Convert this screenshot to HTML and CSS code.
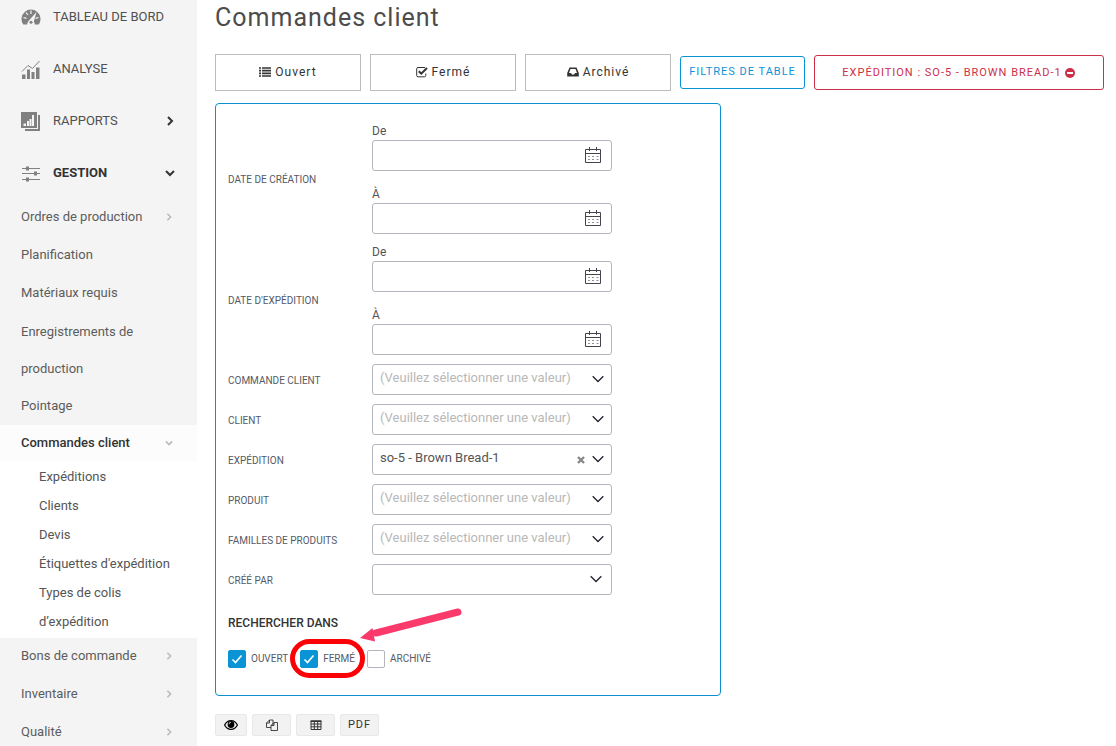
FILE: index.html
```html
<!DOCTYPE html>
<html lang="fr">
<head>
<meta charset="utf-8">
<meta name="viewport" content="width=device-width, initial-scale=1">
<title>Commandes client</title>
<link rel="stylesheet" href="styles.css">
</head>
<body>
<svg class="defs" aria-hidden="true">
  <symbol id="right" viewBox="0 0 10 10"><path d="M3 1l4 4-4 4" fill="none" stroke="currentColor" stroke-width="2"/></symbol>
  <symbol id="down" viewBox="0 0 10 10"><path d="M1 3l4 4 4-4" fill="none" stroke="currentColor" stroke-width="2"/></symbol>
  <symbol id="chevron" viewBox="0 0 12 8"><path d="M.7 1.2L6 6.5l5.300-5.300" fill="none" stroke="currentColor" stroke-width="1.300"/></symbol>
  <symbol id="calendar" viewBox="0 0 16 17"><g fill="none" stroke="currentColor"><path d="M.5 2.500h15v13H.500zM.5 6.500h15M4.500 0v4M11.500 0v4"/><path d="M3 9.500h2M7 9.500h2M11.500 9.500h2M3 12.500h2M7 12.500h2M11.500 12.500h2" stroke-opacity=".6"/></g></symbol>
</svg>
<div class="app">
  <aside class="sidebar">
    <nav>
      <ul class="menu">
        <li><a class="top" href="#"><svg class="top-icon" viewBox="0 0 20 20"><path d="M2.200 17.500A9.500 9.500 0 1 1 17.800 17.500h-4A3.800 3.800 0 0 0 6.200 17.500z" fill="currentColor"/><path d="M10 3.500v3.500M5 5.500l2 2.500M2.500 10.500l3 .8M17.500 10.500l-3 .8" stroke="#f4f4f4" stroke-width="1.200"/><path d="M15.500 5l-3 10.500a2.600 2.600 0 1 1-4.500-2z" fill="#f4f4f4"/><circle cx="10" cy="15.200" r="1.500" fill="currentColor"/></svg><span>TABLEAU DE BORD</span></a></li>
        <li><a class="top" href="#"><svg class="top-icon" viewBox="0 0 20 20"><path d="M1 15.500h3.500V20H1zM6 10.500h3V20H6zM10.500 13h3v7h-3zM15 8.500h3.500V20H15z" fill="currentColor"/><path d="M1 12.500l6-6 4.500 3L18.500 2" fill="none" stroke="currentColor"/></svg><span>ANALYSE</span></a></li>
        <li><a class="top" href="#"><svg class="top-icon" viewBox="0 0 20 20"><path d="M0 1h16v16H0zM17 4h2v16H4v-2h13z" fill="currentColor"/><path d="M2.500 12.500H5V15H2.500zM6 10h2v5H6zM8.500 8h2v7h-2zM11 4h2v11h-2z" fill="#f4f4f4"/></svg><span>RAPPORTS</span><svg class="mark"><use href="#right"/></svg></a></li>
        <li><a class="top current" href="#"><svg class="top-icon" viewBox="0 0 20 20"><path d="M1 5.500h18M1 10.500h18M1 16.500h18" stroke="currentColor"/><path d="M5 3.500h3v4H5zM13 8.500h3v4h-3zM5 14.500h3v4H5z" fill="currentColor"/></svg><span>GESTION</span><svg class="mark"><use href="#down"/></svg></a>
          <ul class="sub">
            <li><a href="#">Ordres de production<svg class="mark"><use href="#right"/></svg></a></li>
            <li><a href="#">Planification</a></li>
            <li><a href="#">Matériaux requis</a></li>
            <li><a href="#">Enregistrements de production</a></li>
            <li><a href="#">Pointage</a></li>
          </ul>
          <div class="open">
            <a class="open-head" href="#">Commandes client<svg class="mark"><use href="#down"/></svg></a>
            <ul class="leaf">
              <li><a href="#">Expéditions</a></li>
              <li><a href="#">Clients</a></li>
              <li><a href="#">Devis</a></li>
              <li><a href="#">Étiquettes d'expédition</a></li>
              <li><a href="#">Types de colis d’expédition</a></li>
            </ul>
          </div>
          <ul class="sub">
            <li><a href="#">Bons de commande<svg class="mark"><use href="#right"/></svg></a></li>
            <li><a href="#">Inventaire<svg class="mark"><use href="#right"/></svg></a></li>
            <li><a href="#">Qualité<svg class="mark"><use href="#right"/></svg></a></li>
          </ul>
        </li>
      </ul>
    </nav>
  </aside>
  <main class="main">
    <h1>Commandes client</h1>
    <div class="toolbar">
      <button class="state" type="button"><svg class="icon" viewBox="0 0 12 12"><path d="M0 2h2M0 4.700h2M0 7.400h2M0 10h2M3 2h9M3 4.700h9M3 7.400h9M3 10h9" stroke="currentColor" stroke-width="1.700"/></svg>Ouvert</button>
      <button class="state" type="button"><svg class="icon" viewBox="0 0 12 12"><path d="M9 1.500H2A1.300 1.300 0 0 0 .7 2.800V9.500A1.300 1.300 0 0 0 2 10.800h6.500A1.300 1.300 0 0 0 9.800 9.500V7.500" fill="none" stroke="currentColor"/><path d="M2.800 5.200l2.500 2.500 5.700-5.700" fill="none" stroke="currentColor" stroke-width="2"/></svg>Fermé</button>
      <button class="state" type="button"><svg class="icon" viewBox="0 0 12 12"><path d="M2.500 1.500h7L11.800 7v3.500H.200V7zM3.500 3L2 7h2l.9 1.500h2.200L8 7h2L8.500 3z" fill="currentColor" fill-rule="evenodd"/></svg>Archivé</button>
      <button class="filters" type="button">FILTRES DE TABLE</button>
      <button class="chip" type="button">EXPÉDITION : SO-5 - BROWN BREAD-1<svg class="icon" viewBox="0 0 12 12"><circle cx="6" cy="6" r="5" fill="currentColor"/><path d="M3 6h6" stroke="#fff" stroke-width="2"/></svg></button>
    </div>
    <form class="panel">
      <div class="row">
        <span class="name">DATE DE CRÉATION</span>
        <div class="dates">
          <div class="date"><label for="c1">De</label><div class="box"><input id="c1" type="text"><svg class="cal"><use href="#calendar"/></svg></div></div>
          <div class="date"><label for="c2">À</label><div class="box"><input id="c2" type="text"><svg class="cal"><use href="#calendar"/></svg></div></div>
        </div>
      </div>
      <div class="row">
        <span class="name">DATE D'EXPÉDITION</span>
        <div class="dates">
          <div class="date"><label for="e1">De</label><div class="box"><input id="e1" type="text"><svg class="cal"><use href="#calendar"/></svg></div></div>
          <div class="date"><label for="e2">À</label><div class="box"><input id="e2" type="text"><svg class="cal"><use href="#calendar"/></svg></div></div>
        </div>
      </div>
      <div class="row"><label class="name" for="s1">COMMANDE CLIENT</label><div class="box"><select id="s1" class="empty"><option>(Veuillez sélectionner une valeur)</option></select><svg class="arrow"><use href="#chevron"/></svg></div></div>
      <div class="row"><label class="name" for="s2">CLIENT</label><div class="box"><select id="s2" class="empty"><option>(Veuillez sélectionner une valeur)</option></select><svg class="arrow"><use href="#chevron"/></svg></div></div>
      <div class="row"><label class="name" for="s3">EXPÉDITION</label><div class="box"><select id="s3"><option>so-5 - Brown Bread-1</option></select><button class="clear" type="button" aria-label="Effacer"><svg viewBox="0 0 8 8"><path d="M1 1l6 6M7 1L1 7" stroke="currentColor" stroke-width="2.400"/></svg></button><svg class="arrow"><use href="#chevron"/></svg></div></div>
      <div class="row"><label class="name" for="s4">PRODUIT</label><div class="box"><select id="s4" class="empty"><option>(Veuillez sélectionner une valeur)</option></select><svg class="arrow"><use href="#chevron"/></svg></div></div>
      <div class="row"><label class="name" for="s5">FAMILLES DE PRODUITS</label><div class="box"><select id="s5" class="empty"><option>(Veuillez sélectionner une valeur)</option></select><svg class="arrow"><use href="#chevron"/></svg></div></div>
      <div class="row"><label class="name" for="s6">CRÉÉ PAR</label><div class="box"><select id="s6"><option></option></select><svg class="arrow plain"><use href="#chevron"/></svg></div></div>
      <fieldset class="search">
        <legend>RECHERCHER DANS</legend>
        <div class="checks">
          <label class="check"><input type="checkbox" checked><svg class="tick" viewBox="0 0 18 18"><path d="M4.500 9.500l3 3 6-7" fill="none" stroke="#fff" stroke-width="1.600"/></svg>OUVERT</label>
          <label class="check"><input type="checkbox" checked><svg class="tick" viewBox="0 0 18 18"><path d="M4.500 9.500l3 3 6-7" fill="none" stroke="#fff" stroke-width="1.600"/></svg>FERMÉ</label>
          <label class="check"><input type="checkbox">ARCHIVÉ</label>
          <svg class="callout" viewBox="0 0 174 72" aria-hidden="true">
            <rect x="2.500" y="34.500" width="70" height="34" rx="17" fill="none" stroke="#fb0207" stroke-width="5"/>
            <path d="M168 5L86 26" stroke="#fb3a6c" stroke-width="7" stroke-linecap="round"/>
            <path d="M70 31L82.500 21l2.500 13.500z" fill="#fb3a6c"/>
          </svg>
        </div>
      </fieldset>
    </form>
    <div class="exports">
      <button class="narrow" type="button" aria-label="Colonnes"><svg class="eye" viewBox="0 0 14 10"><path d="M.6 5C3.500-.8 10.500-.8 13.400 5 10.500 10.800 3.500 10.800.6 5z" fill="none" stroke="#000" stroke-width="1.200"/><circle cx="7" cy="4.500" r="3.400"/><path d="M5 4.300A2 2 0 0 1 7 2.300" fill="none" stroke="#fff" stroke-width=".8"/></svg></button>
      <button type="button" aria-label="Copier"><svg class="icon" viewBox="0 0 12 12"><g fill="#f2f2f2" stroke="currentColor" stroke-width=".9"><path d="M3.500 1H7v7.500H.500V4zM.5 4h3V1"/><path d="M8 3.500h3.500v8H5V6.500zM5 6.500h3v-3"/></g></svg></button>
      <button type="button" aria-label="Tableau"><svg class="icon" viewBox="0 0 12 12"><path d="M1 2h10v8.500H1zM1 5h10M1 7.800h10M4.300 2v8.500M7.700 2v8.500" fill="none" stroke="currentColor"/><path d="M.5 1.500h11V3H.500z" fill="currentColor"/></svg></button>
      <button type="button">PDF</button>
    </div>
  </main>
</div>
</body>
</html>
```
FILE: styles.css
```css
* { box-sizing: border-box; }
body { margin: 0; background: #fff; color: #555; font: 13px/20px Roboto, "Noto Sans", sans-serif; }
button, input, select { font: inherit; color: inherit; }
ul { list-style: none; margin: 0; padding: 0; }
a { color: inherit; text-decoration: none; }
.defs { display: none; }
.app { display: flex; min-height: 100vh; overflow: hidden; }
.sidebar { flex: 0 0 197px; background: #f4f4f4; padding-top: 1px; }

.menu { display: flex; flex-direction: column; gap: 20px; }
.top { display: flex; align-items: center; gap: 12px; height: 32px; padding: 0 22px 0 21px; color: #505050; }
.top-icon { width: 20px; height: 20px; color: #808080; }
.top.current { font-weight: 700; color: #333; }
.mark { width: 10px; height: 10px; flex: none; margin-left: auto; color: #bbb; }
.top .mark { color: #333; }
.sub { display: flex; flex-direction: column; gap: 1px; }
.top + .sub { margin-top: 10px; }
.sub a, .open-head { display: flex; align-items: center; line-height: 36px; padding: 0 24px 1px 21px; color: #5c5c5c; }
.sub .mark, .open-head .mark { width: 8px; height: 8px; }
.sub li:nth-child(4) a { line-height: 37px; padding-bottom: 0; }
.open { background: #fff; }
.open-head { background: #fcfcfc; font-weight: 500; color: #333; }
.leaf { line-height: 29px; padding: 0 16px 2px 39px; }
.leaf a { display: block; }

.main { flex: 1; min-width: 0; padding: 2px 12px 0 18px; }
h1 { margin: 0; font-size: 25px; line-height: 32px; font-weight: 400; letter-spacing: 1px; color: #4c4c4c; }
.toolbar { display: flex; align-items: center; gap: 9px; margin-top: 20px; }
.toolbar button { display: flex; align-items: center; justify-content: center; gap: 4px; padding: 0 0 2px; background: #fff; letter-spacing: 1px; }
.icon { width: 12px; height: 12px; }
.toolbar .state { width: 146px; height: 37px; border: 1px solid #bcbcbc; color: #333; font-size: 12px; }
.toolbar .filters { height: 33px; width: 125px; border: 1px solid #0a94d6; border-radius: 3px; color: #0a94d6; font-size: 11px; }
.toolbar .chip { flex: 1; gap: 2px; height: 35px; padding: 0; border: 1px solid #cd2f48; border-radius: 3px; color: #cd2f48; font-size: 11px; }

.panel { display: flex; flex-direction: column; gap: 9px; width: 506px; margin-top: 12px; padding: 18px 12px 27px; border: 1px solid #0a8fd0; border-radius: 4px; }
.row { display: grid; grid-template-columns: 144px 240px; align-items: center; }
.name { padding-top: 3px; font-size: 10px; color: #555a66; }
.date label { display: block; font-size: 12px; line-height: 18px; }
.dates { display: grid; gap: 14px; }
.box { position: relative; height: 31px; }
.box input, .box select { display: block; width: 100%; height: 100%; margin: 0; padding: 0 28px 3px 7px; border: 1px solid #b5b5bd; border-radius: 3px; background: #fff; appearance: none; }
.box .empty { color: #b8b8b8; }
.cal { position: absolute; right: 11px; top: 7px; width: 16px; height: 17px; color: #454552; pointer-events: none; }
.arrow { position: absolute; right: 8px; top: 11px; width: 12px; height: 8px; color: #222233; pointer-events: none; }
.arrow.plain { right: 10px; }
.clear { position: absolute; right: 27px; top: 12px; width: 8px; height: 8px; padding: 0; border: 0; background: none; color: #888; }
.clear svg { display: block; }

.search { margin: 9px 0 0; padding: 0; border: 0; min-width: 0; }
.search legend { padding: 0; font-size: 12px; line-height: 20px; font-weight: 500; color: #333; }
.checks { position: relative; display: flex; gap: 12px; margin-top: 17px; }
.check { position: relative; display: flex; align-items: center; gap: 5px; font-size: 10px; line-height: 18px; color: #555a66; }
.check input { appearance: none; width: 18px; height: 18px; margin: 0; border: 1px solid #b5b5bd; border-radius: 2px; background: #fff; }
.check input:checked { background: #0a94d6; border-color: #0a94d6; }
.tick { position: absolute; left: 0; top: 0; width: 18px; height: 18px; pointer-events: none; }
.callout { position: absolute; left: 62px; top: -43px; width: 174px; height: 72px; pointer-events: none; }

.exports { display: flex; gap: 5px; margin-top: 18px; }
.exports button { display: flex; align-items: center; justify-content: center; width: 39px; height: 22px; padding: 0; border: 1px solid #e8e8e8; border-radius: 2px; background: #f2f2f2; color: #333; font-size: 11px; letter-spacing: 1px; }
.exports .narrow { width: 32px; }
.eye { width: 14px; height: 10px; }
```
